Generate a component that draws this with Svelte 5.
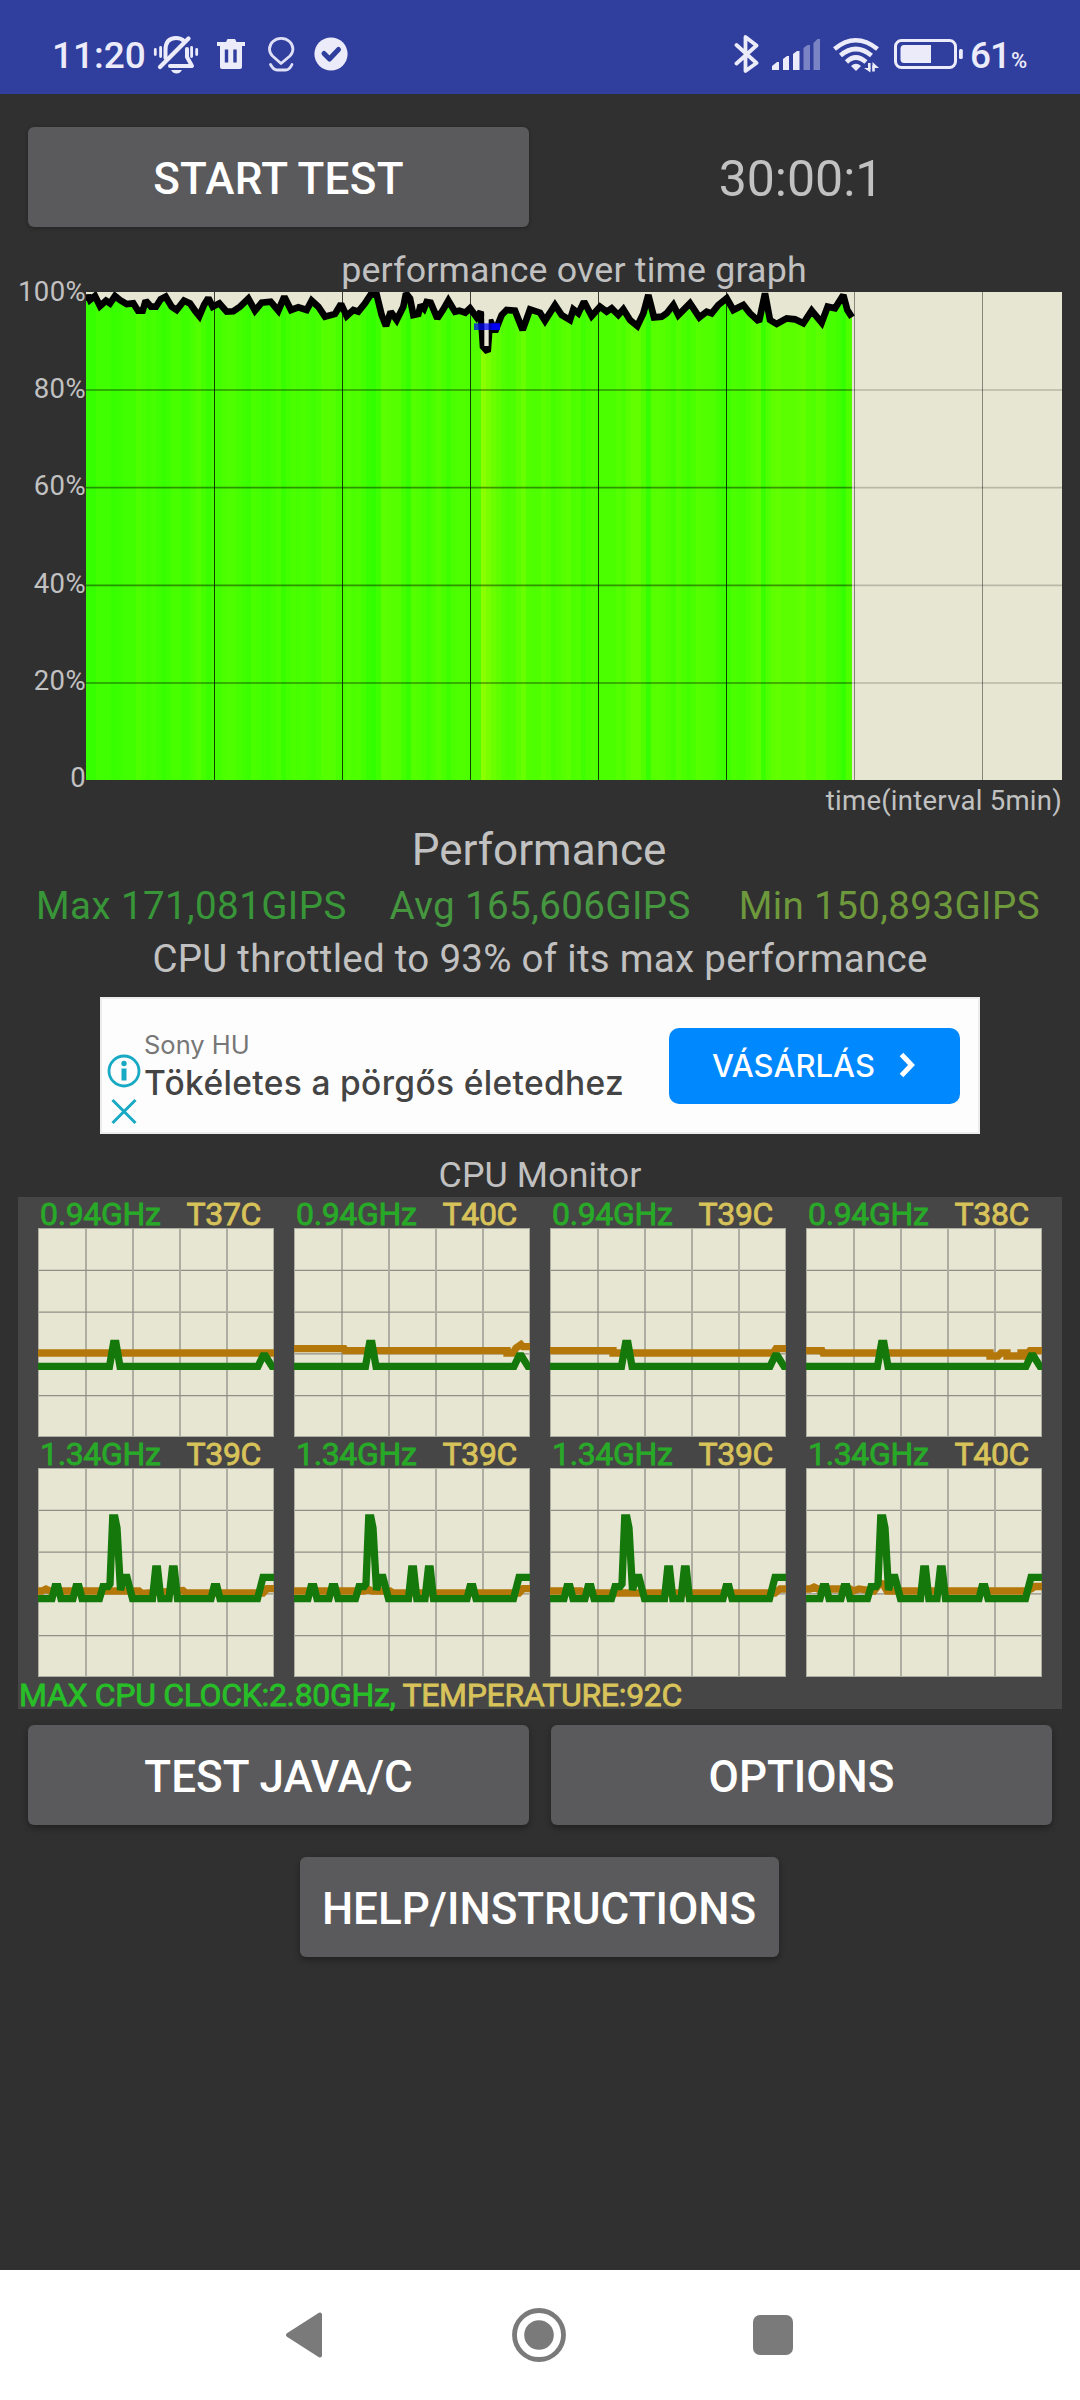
<script>
  // Performance trace, as x, drop pairs in thirds of a pixel (0 = 100%)
  const trace = [
    0, 26, 6, 10, 12, 24, 27, 12, 42, 42, 60, 26, 72, 34, 87, 12, 102, 24, 122, 36, 142, 34, 156, 56, 170, 56,
    179, 26, 195, 44, 210, 44, 224, 22, 239, 14, 257, 44, 272, 54, 294, 26, 312, 34, 327, 56, 340, 72,
    354, 39, 367, 18, 380, 44, 400, 34, 422, 59, 442, 58, 462, 44, 487, 20, 507, 56, 527, 32, 554, 29,
    577, 56, 595, 14, 615, 54, 637, 46, 662, 54, 677, 26, 697, 44, 717, 74, 747, 66, 765, 36, 782, 72,
    802, 54, 817, 59, 837, 34, 854, 8, 872, 8, 887, 69, 900, 102, 914, 59, 932, 84, 952, 44, 960, 4,
    972, 19, 982, 69, 997, 66, 1004, 39, 1014, 50, 1022, 30, 1034, 32, 1054, 79, 1072, 52, 1087, 26,
    1107, 59, 1120, 56, 1138, 62, 1152, 49, 1172, 76, 1184, 59, 1191, 164, 1205, 179, 1212, 84, 1227, 119,
    1247, 69, 1262, 54, 1287, 56, 1310, 114, 1332, 52, 1362, 62, 1377, 86, 1407, 39, 1427, 69, 1452, 84,
    1462, 52, 1477, 64, 1494, 29, 1517, 72, 1542, 44, 1562, 59, 1577, 49, 1597, 69, 1612, 52, 1632, 84,
    1654, 102, 1672, 64, 1687, 9, 1704, 76, 1727, 74, 1742, 64, 1762, 39, 1777, 69, 1812, 34, 1840, 76,
    1862, 59, 1877, 64, 1897, 39, 1922, 19, 1942, 54, 1972, 39, 1992, 64, 2019, 89, 2037, 4, 2052, 84,
    2072, 96, 2102, 79, 2127, 82, 2152, 94, 2177, 56, 2207, 92, 2225, 44, 2247, 49, 2272, 9, 2284, 54,
    2298, 76
  ];

  const points = [];
  for (let i = 0; i < trace.length; i += 2) points.push([trace[i], trace[i + 1]]);
  const line = points.map((p) => p.join(',')).join(' ');
  const area = `0,1464 ${line} 2298,1464`;

  function dropAt(x) {
    const i = Math.max(1, points.findIndex((p) => p[0] >= x));
    const [x0, y0] = points[i - 1];
    const [x1, y1] = points[i];
    return y0 + ((y1 - y0) * (x - x0)) / (x1 - x0);
  }

  // The lower the score, the more red is mixed into the bar
  const bars = [];
  for (let x = 0; x < 2298; x += 15) {
    const drop = dropAt(Math.min(x + 8, 2298));
    bars.push({ x, fill: `rgb(${Math.round(46 + drop * 0.55)}, 255, 0)` });
  }

  const levels = ['100%', '80%', '60%', '40%', '20%', '0'];

  const lowClock =
    '0,138.3 71.5,138.3 75.5,115.5 78,115.5 82,138.3 220,138.3 225,128 227.5,128 234,138.3 236,138.3';
  const highClock =
    '0,130.7 14,130.7 17,118.7 20,118.7 23,130.7 35,130.7 38,118.7 41,118.7 44,130.7 61.5,130.7 ' +
    '65,118.7 70,118.7 72,116 74.7,49.8 77,49.8 79,60 82.5,122 86,109.5 89,109.5 94.5,130.7 ' +
    '114.5,130.7 117.6,101 119.6,101 122.8,130.7 131,130.7 134.3,101 136.3,101 139.5,130.7 ' +
    '173,130.7 176,118.7 179,118.7 182,130.7 219.5,130.7 225,109.3 236,109.3';

  const cores = [
    { clock: '0.94GHz', temp: 'T37C', green: lowClock, amber: '0,125 236,125' },
    {
      clock: '0.94GHz', temp: 'T40C', green: lowClock,
      amber: '0,120.7 50,120.7 51,122.7 73,122.7 77,119 80,122.7 213,122.7 213,125 219,125 222,120 227,116.5 229,118.7 236,118.7'
    },
    {
      clock: '0.94GHz', temp: 'T39C', green: lowClock,
      amber: '0,122.7 63,122.7 63,125 223,125 226,120.7 236,120.7'
    },
    {
      clock: '0.94GHz', temp: 'T38C', green: lowClock,
      amber: '0,122.7 16,122.7 17,125 184,125 184,128 192,128 195,125 201,125 201,128 215,128 215,125 219,125 220,127 224,122.7 236,122.7'
    },
    {
      clock: '1.34GHz', temp: 'T39C', green: highClock,
      amber: '0,123 4,123 8,121 12,123 101,123 104,125.5 145,122.5 148,125 220,125 225,125 229,120.7 236,120.7'
    },
    {
      clock: '1.34GHz', temp: 'T39C', green: highClock,
      amber: '0,123 70,123 74,121 78,123 96,123 99,125 220,125 225,125 229,120.7 236,120.7'
    },
    {
      clock: '1.34GHz', temp: 'T39C', green: highClock,
      amber: '0,123 31,123 34,125 220,125 225,125 230,121 236,121'
    },
    {
      clock: '1.34GHz', temp: 'T40C', green: highClock,
      amber: '0,121 4,121 8,119 12,121 44,121 47,123 53,121 68,123 74,115 77,116 81,123 220,123 225,121 229,118.5 236,118.5'
    }
  ];
</script>

<div class="screen">
  <header class="status">
    <span class="clock">11:20</span>
    <svg class="bell" width="46" height="94" viewBox="153 0 46 94" fill="none" stroke="#ebebfa" stroke-linecap="round">
      <path d="M165.500 58V50q0-12 10.500-12 5 0 8 3M187 49v8l5 9h-22" stroke-width="4" stroke-linejoin="round" />
      <path d="M188.500 38.500 160 67" stroke-width="4.200" />
      <path d="M171 70h11q-2 3.500-5.500 3.500T171 70z" fill="#ebebfa" stroke="none" />
      <path d="M155.300 49.500v5M160.600 47.500v9M191.600 47.500v9M196.700 49.500v5" stroke-width="2.800" />
    </svg>
    <svg class="bin" width="28" height="94" viewBox="217 0 28 94">
      <path d="M217 42h9l1.500-3h7.500l1.500 3h8.500v4H242v21q0 2-2 2h-18q-2 0-2-2V46h-3z" fill="#ebebfa" />
      <path d="M226.500 49.500v13M235 49.500v13" stroke="#303e9e" stroke-width="3.400" />
    </svg>
    <svg class="pin" width="28" height="94" viewBox="267 0 28 94" fill="none" stroke="#dfe0f6" stroke-width="2.800" stroke-linecap="round" stroke-linejoin="round">
      <path d="M281 63.500 272.500 56q-3-3-3-7a11.700 10.700 0 0 1 23.400 0q0 4-3 7z" />
      <path d="M270.500 64.500q3 5.500 6.500 5.500h8.500q4 0 6.500-5.500" />
    </svg>
    <svg class="check" width="34" height="94" viewBox="314 0 34 94">
      <circle cx="331" cy="54" r="16.600" fill="#ebebfa" />
      <path d="m324 53.500 5.500 5.500 9-9.500" fill="none" stroke="#303e9e" stroke-width="5" stroke-linecap="round" stroke-linejoin="round" />
    </svg>

    <svg class="bluetooth" width="26" height="94" viewBox="733 0 26 94" fill="none" stroke="#ebebfa" stroke-width="3.800" stroke-linecap="round" stroke-linejoin="round">
      <path d="m736.500 45 20 18-11 8V37l11 8.500-20 18" />
    </svg>
    <svg class="signal" width="49" height="94" viewBox="771 0 49 94" fill="#ebebfa">
      <path d="M772 70v-4l5-4h2v8zM783 70V59l4-3h2v14zM793 70V54l4-3h2.500v19z" />
      <path d="M803.500 70V48l4-3h2.500v25zM813.500 70V43l4-4h2.500v31z" opacity=".4" />
    </svg>
    <svg class="wifi" width="48" height="94" viewBox="832 0 48 94" fill="none" stroke="#ebebfa" stroke-width="4.600">
      <path d="M834.500 49q21-17.500 43 0" />
      <path d="M840.500 55.500q15-13 31 0" />
      <path d="M846.500 62q9-9 19.500 0" />
      <path d="M851 66q5-4.500 10 0l-5 5z" fill="#ebebfa" stroke="none" />
      <path d="M869.300 63v6M873.500 65.500v6" stroke-width="2.600" />
      <path d="M864 68h6.500v4.500zM872.500 62v6H879z" fill="#ebebfa" stroke="none" />
    </svg>
    <svg class="battery" width="70" height="94" viewBox="893 0 70 94">
      <rect x="895.500" y="40.500" width="60" height="27" rx="6" fill="none" stroke="#ebebfa" stroke-width="3" />
      <path d="M904 45h27v18h-27q-3.500 0-3.500-4V49q0-4 3.500-4z" fill="#ebebfa" />
      <rect x="959" y="49" width="3.800" height="10" rx="1.500" fill="#ebebfa" />
    </svg>
    <span class="charge">61</span><span class="percent">%</span>
  </header>

  <main>
    <div class="row top">
      <button type="button">START TEST</button>
      <div class="timer">30:00:1</div>
    </div>

    <h2 class="graph-title">performance over time graph</h2>
    <div class="graph">
      <div class="levels">
        {#each levels as level}
          <span>{level}</span>
        {/each}
      </div>
      <svg class="plot" viewBox="0 0 2928 1464">
        <defs>
          <clipPath id="scored"><polygon points={area} /></clipPath>
        </defs>
        <rect width="2928" height="1464" fill="#e6e6d2" />
        <g clip-path="url(#scored)" shape-rendering="crispEdges">
          {#each bars as bar}
            <rect x={bar.x} y="0" width="15" height="1464" fill={bar.fill} />
          {/each}
        </g>
        {#each [1, 2, 3, 4] as n}
          <path d="M0 {n * 293 + 1}H2298" stroke="#000" stroke-opacity=".42" stroke-width="5" />
          <path d="M2298 {n * 293 + 1}H2928" stroke="#000" stroke-opacity=".2" stroke-width="5" />
        {/each}
        {#each [1, 2, 3, 4, 5, 6, 7] as n}
          <path d="M{n * 384 + 1.5} 0V1464" stroke="#000" stroke-opacity={n > 5 ? 0.42 : 0.75} stroke-width="3" />
        {/each}
        <polyline points={line} fill="none" stroke="#000" stroke-width="20" stroke-linejoin="miter" stroke-miterlimit="2" />
        <rect x="1195" y="72" width="13" height="90" fill="#e6e6d2" />
        <rect x="1164" y="94" width="78" height="20" fill="#0000ff" fill-opacity=".72" />
        <rect x="1216" y="94" width="26" height="20" fill="#0000f0" />
      </svg>
    </div>
    <div class="interval">time(interval 5min)</div>

    <h1>Performance</h1>
    <div class="stats">
      <span class="max">Max 171,081GIPS</span>
      <span class="avg">Avg 165,606GIPS</span>
      <span class="min">Min 150,893GIPS</span>
    </div>
    <p class="verdict">CPU throttled to 93% of its max performance</p>

    <div class="ad">
      <svg class="ad-marks" width="36" height="80" viewBox="0 0 36 80" fill="none" stroke="#18a9c4">
        <circle cx="18" cy="18" r="15" stroke-width="2.800" />
        <circle cx="18" cy="10.500" r="2.700" fill="#18a9c4" stroke="none" />
        <path d="M18 15.500v12" stroke-width="5" />
        <path d="m6.500 47 23 23M29.500 47l-23 23" stroke-width="3" />
      </svg>
      <div class="ad-copy">
        <span class="brand">Sony HU</span>
        <span class="slogan">Tökéletes a pörgős életedhez</span>
      </div>
      <a class="buy" href="#buy">
        <span>VÁSÁRLÁS</span>
        <svg width="20" height="28" viewBox="0 0 20 28" fill="none" stroke="#fff" stroke-width="5">
          <path d="m3.500 3.500 10 10.500-10 10.500" />
        </svg>
      </a>
    </div>

    <h2 class="monitor-title">CPU Monitor</h2>
    <section class="monitor">
      <div class="cores">
        {#each cores as core}
          <div class="core">
            <div class="reading">
              <span class="ghz">{core.clock}</span>
              <span class="temp">{core.temp}</span>
            </div>
            <svg width="236" height="209" viewBox="0 0 236 209">
              <rect width="236" height="209" fill="#e6e6d2" />
              {#each [1, 2, 3, 4] as n}
                <path d="M{n * 47 + 1} 0V209" stroke="#adada2" stroke-width="2" />
                <path d="M0 {n * 41.8 + 0.5}H236" stroke="#8f8f86" stroke-width="1.300" />
              {/each}
              <rect x=".5" y=".5" width="235" height="208" fill="none" stroke="#adada2" />
              <polyline points={core.amber} fill="none" stroke="#b4780a" stroke-width="7.300" />
              <polyline points={core.green} fill="none" stroke="#14780a" stroke-width="7.300" />
            </svg>
          </div>
        {/each}
      </div>
      <div class="limits">
        <span class="limit-clock">MAX CPU CLOCK:2.80GHz,</span> <span class="temp">TEMPERATURE:92C</span>
      </div>
    </section>

    <div class="row actions">
      <button type="button">TEST JAVA/C</button>
      <button type="button">OPTIONS</button>
    </div>
    <button type="button" class="help">HELP/INSTRUCTIONS</button>
  </main>

  <nav>
    <svg width="40" height="50" viewBox="0 0 40 50" fill="#7a7a7a" stroke="#7a7a7a" stroke-width="4" stroke-linejoin="round">
      <path d="M4 25 36 4.500v41z" />
    </svg>
    <svg width="54" height="56" viewBox="0 0 54 56">
      <circle cx="27" cy="28" r="24.500" fill="none" stroke="#7a7a7a" stroke-width="4.800" />
      <circle cx="27" cy="28" r="14.800" fill="#7a7a7a" />
    </svg>
    <svg width="40" height="40" viewBox="0 0 40 40">
      <rect width="40" height="40" rx="7" fill="#7a7a7a" />
    </svg>
  </nav>
</div>

<style>
  .screen {
    display: flex;
    flex-direction: column;
    width: 1080px;
    height: 2400px;
    overflow: hidden;
    background: #303030;
    color: #c1c1c1;
    font-family: Roboto, sans-serif;
  }

  h1, h2, p {
    margin: 0;
    font-weight: 400;
    text-align: center;
  }

  svg {
    display: block;
    flex: none;
  }

  /* Status bar */
  .status {
    display: flex;
    flex: none;
    height: 94px;
    background: #303e9e;
    color: #ebebfa;
    line-height: 111px;
  }

  .clock {
    width: 101px;
    padding-left: 52px;
    font-size: 37px;
    font-weight: 500;
    white-space: nowrap;
  }

  .bin { margin-left: 18px; }
  .pin { margin-left: 22px; }
  .check { margin-left: 19px; }
  .bluetooth { margin-left: auto; }
  .signal { margin-left: 12px; }
  .wifi { margin-left: 12px; }
  .battery { margin-left: 13px; }

  .charge {
    margin-left: 7px;
    width: 41px;
    font-size: 37px;
    font-weight: 500;
    letter-spacing: -1px;
  }

  .percent {
    width: 69px;
    font-size: 22px;
    font-weight: 500;
    line-height: 121px;
  }

  /* Content */
  main {
    display: flex;
    flex: 1;
    flex-direction: column;
    padding: 33px 18px 0;
  }

  .row {
    display: grid;
    grid-template-columns: 501px 501px;
    gap: 22px;
    padding: 0 10px;
  }

  button {
    height: 100px;
    padding: 3px 0 0;
    border: none;
    border-radius: 6px;
    background: #5a5a5c;
    box-shadow: 0 3px 6px rgba(0, 0, 0, 0.32);
    color: #fff;
    font: 500 44px Roboto, sans-serif;
  }

  .top button {
    box-shadow: 0 1px 4px rgba(0, 0, 0, 0.3);
    letter-spacing: 0.3px;
  }

  .timer {
    font-size: 50px;
    line-height: 104px;
    text-align: center;
    height: 100px;
    padding-right: 1px;
  }

  .graph-title {
    margin: 23px 0 2px 104px;
    padding-right: 36px;
    font-size: 35.75px;
    letter-spacing: 0.18px;
    line-height: 40px;
  }

  .graph {
    display: flex;
    height: 488px;
  }

  .levels {
    display: flex;
    flex-direction: column;
    justify-content: space-between;
    width: 68px;
    margin: -10px 0 -8px;
    font-size: 27.5px;
    letter-spacing: 0.4px;
    line-height: 20px;
    text-align: right;
  }

  .plot {
    width: 976px;
    height: 488px;
  }

  .interval {
    margin-top: 5px;
    font-size: 27.5px;
    letter-spacing: 0.25px;
    line-height: 32px;
    text-align: right;
  }

  h1 {
    margin-top: 7px;
    font-size: 44px;
    line-height: 52px;
    padding-right: 2px;
  }

  .stats {
    display: flex;
    justify-content: space-between;
    margin-top: 7px;
    padding: 0 22px 0 18px;
    font-size: 38.5px;
    letter-spacing: 0.42px;
    line-height: 46px;
  }

  .max { color: #389638; }
  .avg {
    margin-right: 5px;
    color: #469640;
  }
  .min { color: #6e983c; }

  .verdict {
    margin-top: 7px;
    font-size: 38.5px;
    letter-spacing: 0.28px;
    line-height: 46px;
  }

  /* Banner */
  .ad {
    display: flex;
    box-sizing: border-box;
    width: 880px;
    height: 137px;
    margin: 15px auto 0;
    border: 2px solid #ececec;
    background: #fdfdfd;
    font-family: Inter, sans-serif;
  }

  .ad-marks {
    margin: 54px 0 0 4px;
  }

  .ad-copy {
    display: flex;
    flex: 1;
    flex-direction: column;
    margin-left: 2px;
    padding-top: 27px;
    white-space: nowrap;
  }

  .brand {
    color: #777;
    font-size: 25.5px;
    line-height: 38px;
  }

  .slogan {
    color: #444;
    font-size: 33.5px;
    font-weight: 500;
    letter-spacing: 0.35px;
    line-height: 38px;
  }

  .buy {
    display: flex;
    align-items: center;
    justify-content: space-between;
    box-sizing: border-box;
    width: 291px;
    height: 76px;
    margin: 29px 18px 0 0;
    padding: 0 42px 2px 43px;
    border-radius: 10px;
    background: #0088ff;
    color: #fff;
    font-size: 31px;
    font-weight: 500;
    text-decoration: none;
  }

  /* CPU monitor */
  .monitor-title {
    margin: 20px 0 1px;
    font-size: 35.75px;
    letter-spacing: 0.1px;
    line-height: 42px;
  }

  .monitor {
    height: 512px;
    background: #464646;
    font-size: 32px;
    -webkit-text-stroke: 0.8px;
  }

  .cores {
    display: grid;
    grid-template-columns: repeat(4, 236px);
    gap: 0 20px;
    padding-left: 20px;
  }

  .reading {
    display: flex;
    justify-content: space-between;
    height: 31px;
    padding: 0 13px 0 2px;
    letter-spacing: -0.35px;
    line-height: 35px;
  }

  .ghz { color: #28aa28; }
  .temp { color: #d8c35a; }
  .limit-clock { color: #28be28; }

  .limits {
    padding-left: 1px;
    letter-spacing: -0.33px;
    line-height: 36px;
    white-space: nowrap;
  }

  .actions {
    margin-top: 16px;
  }

  .help {
    align-self: center;
    width: 479px;
    margin: 32px 2px 0 0;
  }

  /* Navigation bar */
  nav {
    display: flex;
    flex: none;
    align-items: center;
    justify-content: space-between;
    box-sizing: border-box;
    height: 130px;
    padding: 0 287px 0 284px;
    background: #fff;
  }
</style>
